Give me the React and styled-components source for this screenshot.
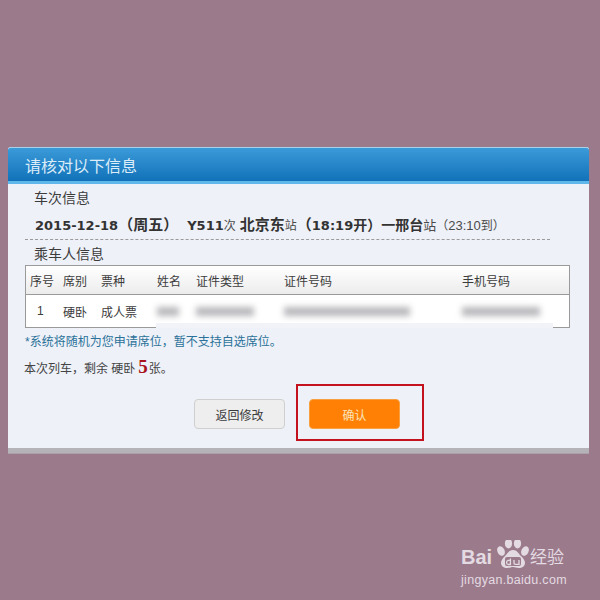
import React from 'react';
import styled, { createGlobalStyle } from 'styled-components';

const GlobalStyle = createGlobalStyle`
	html, body {
		margin: 0;
		padding: 0;
	}
	body {
		font-family: "Liberation Sans", "Noto Sans CJK SC", sans-serif;
	}
`;

const Page = styled.div`
	position: relative;
	width: 600px;
	height: 600px;
	box-sizing: border-box;
	padding: 147px 11px 0 8px;
	background-color: #9b7b8b;
	overflow: hidden;
`;

const Dialog = styled.div`
	position: relative;
	height: 301px;
	background-color: #eef1f8;
	border-radius: 3px 3px 0 0;
	border-bottom: 5px solid #b5b3b8;
	box-shadow: 0 1px 0 #a9a0a8;
`;

const Header = styled.div`
	height: 37px;
	box-sizing: border-box;
	padding-left: 17px;
	display: flex;
	align-items: center;
	background: linear-gradient(#3b9ad8, #1272b9);
	border-top: 1px solid #a9cfe9;
	border-bottom: 3px solid #5fb7ea;
	border-radius: 3px 3px 0 0;
	color: #dcecf8;
	font-size: 16px;
`;

const Body = styled.div`
	display: flex;
	flex-direction: column;
	padding: 5px 19px 0 17px;
`;

const SectionTitle = styled.div`
	padding-left: 9px;
	height: 18px;
	line-height: 18px;
	font-size: 14px;
	color: #3c3c3c;
`;

const TrainRow = styled.div`
	display: flex;
	align-items: baseline;
	margin-top: 6px;
	height: 18px;
	padding-left: 10px;
	color: #333;
	white-space: nowrap;
`;

const Strong = styled.span`
	font-family: "DejaVu Sans", "Noto Sans CJK SC", sans-serif;
	font-weight: 700;
	font-size: ${props => props.size || 13}px;
	margin-left: ${props => props.gap || 0}px;
`;

const Small = styled.span`
	font-size: ${props => props.size || 12}px;
	color: #4a4a4a;
	margin-left: ${props => props.gap || 0}px;
`;

const Dashed = styled.div`
	width: 525px;
	margin-top: 8px;
	margin-bottom: 5px;
	border-top: 1px dashed #9a9a9a;
`;

const Table = styled.div`
	position: relative;
	margin-top: 2px;
	width: 545px;
	box-sizing: border-box;
	border: 1px solid #9a9a9a;
	background-color: #fff;
	font-size: 12px;
	color: #3c3c3c;
`;

const TableRow = styled.div`
	display: grid;
	grid-template-columns: 33px 38px 56px 39px 88px 178px 1fr;
	align-items: center;
	padding-left: 4px;
	height: ${props => props.head ? 28 : 32}px;
	background: ${props => props.head ? 'linear-gradient(#ffffff, #ececec)' : '#fff'};
	border-bottom: ${props => props.head ? '1px solid #9a9a9a' : '0'};
`;

const Index = styled.span`
	padding-left: 7px;
`;

const Blurred = styled.span`
	justify-self: start;
	width: ${props => props.width}px;
	height: 9px;
	background-color: #b7b7bb;
	filter: blur(3px);
`;

const Fade = styled.div`
	position: absolute;
	left: 130px;
	right: 16px;
	bottom: -1px;
	height: 5px;
	background-color: #f1f3f9;
`;

const Note = styled.div`
	margin-top: 5px;
	height: 18px;
	line-height: 18px;
	font-size: 12px;
	color: #2b7199;
`;

const Remain = styled.div`
	display: flex;
	align-items: baseline;
	margin-top: 5px;
	margin-left: -1px;
	height: 20px;
	font-size: 12px;
	color: #444;
`;

const Count = styled.span`
	font-family: "Liberation Serif", serif;
	font-weight: 700;
	font-size: 19px;
	color: #a8141c;
	margin: 0 1px 0 3px;
`;

const Actions = styled.div`
	display: flex;
	gap: 24px;
	margin-top: 23px;
	padding-left: 169px;
`;

const Button = styled.div`
	width: 91px;
	height: 30px;
	box-sizing: border-box;
	display: flex;
	align-items: center;
	justify-content: center;
	border-radius: 4px;
	font-size: 12px;
	color: ${props => props.primary ? '#fbe3b8' : '#3c3c3c'};
	background-color: ${props => props.primary ? '#ff8005' : '#eeeeee'};
	border: 1px solid ${props => props.primary ? '#f8a040' : '#cfcfcf'};
`;

const Highlight = styled.div`
	position: absolute;
	left: 296px;
	top: 384px;
	width: 128px;
	height: 57px;
	box-sizing: border-box;
	border: 2px solid #c3111d;
`;

const Watermark = styled.div`
	position: absolute;
	left: 461px;
	top: 540px;
	width: 110px;
	color: #e4dae2;
`;

const LogoRow = styled.div`
	display: flex;
	align-items: flex-end;
	height: 29px;
`;

const LogoLatin = styled.span`
	font-family: "Liberation Sans", sans-serif;
	font-weight: 700;
	font-size: 20px;
	line-height: 24px;
	width: 35px;
`;

const LogoCjk = styled.span`
	font-size: 17px;
	line-height: 23px;
	white-space: nowrap;
`;

const LogoUrl = styled.div`
	font-family: "Liberation Sans", sans-serif;
	font-size: 12.5px;
	letter-spacing: 0.3px;
	margin-top: 4px;
	white-space: nowrap;
`;

const Paw = () => (
	<svg width="34" height="29" viewBox="0 0 34 29" fill="currentColor">
		<ellipse cx="5" cy="11" rx="3.6" ry="5" transform="rotate(-25 5 11)" />
		<ellipse cx="12.5" cy="3.5" rx="3.6" ry="5" />
		<ellipse cx="21.5" cy="3.5" rx="3.6" ry="5" />
		<ellipse cx="29" cy="11" rx="3.6" ry="5" transform="rotate(25 29 11)" />
		<path d="M17 10c-4 0-5 3-8 6-3 3-4 5-4 7 0 3 3 5 6 5 3 0 4-1 6-1s3 1 6 1c3 0 6-2 6-5 0-2-1-4-4-7-3-3-4-6-8-6z" />
		<rect x="9" y="17" width="16" height="9" rx="2" fill="#9b7b8b" />
		<path d="M14.4 18.5v6h-2.3a2.2 2.2 0 0 1 0-4.2h2.3M18 20v3a1.4 1.4 0 0 0 1.4 1.4H23V20" fill="none" stroke="currentColor" strokeWidth="1.3" />
	</svg>
);

const App = () => (
	<Page>
		<GlobalStyle />
		<Dialog>
			<Header>请核对以下信息</Header>
			<Body>
				<SectionTitle>车次信息</SectionTitle>
				<TrainRow>
					<Strong>2015-12-18</Strong>
					<Strong size={15}>（周五）</Strong>
					<Strong gap={9}>Y511</Strong>
					<Small>次</Small>
					<Strong size={15} gap={4}>北京东</Strong>
					<Small>站</Small>
					<Strong size={15}>（</Strong>
					<Strong>18:19</Strong>
					<Strong size={14}>开）一邢台</Strong>
					<Small size={13}>站</Small>
					<Small>（</Small>
					<Small size={13}>23:10</Small>
					<Small>到）</Small>
				</TrainRow>
				<Dashed />
				<SectionTitle>乘车人信息</SectionTitle>
				<Table>
					<TableRow head>
						<span>序号</span>
						<span>席别</span>
						<span>票种</span>
						<span>姓名</span>
						<span>证件类型</span>
						<span>证件号码</span>
						<span>手机号码</span>
					</TableRow>
					<TableRow>
						<Index>1</Index>
						<span>硬卧</span>
						<span>成人票</span>
						<Blurred width={22} />
						<Blurred width={58} />
						<Blurred width={126} />
						<Blurred width={78} />
					</TableRow>
					<Fade />
				</Table>
				<Note>*系统将随机为您申请席位，暂不支持自选席位。</Note>
				<Remain>
					本次列车，剩余 硬卧<Count>5</Count>张。
				</Remain>
				<Actions>
					<Button>返回修改</Button>
					<Button primary>确认</Button>
				</Actions>
			</Body>
		</Dialog>
		<Highlight />
		<Watermark>
			<LogoRow>
				<LogoLatin>Bai</LogoLatin>
				<Paw />
				<LogoCjk>经验</LogoCjk>
			</LogoRow>
			<LogoUrl>jingyan.baidu.com</LogoUrl>
		</Watermark>
	</Page>
);

export default App;
